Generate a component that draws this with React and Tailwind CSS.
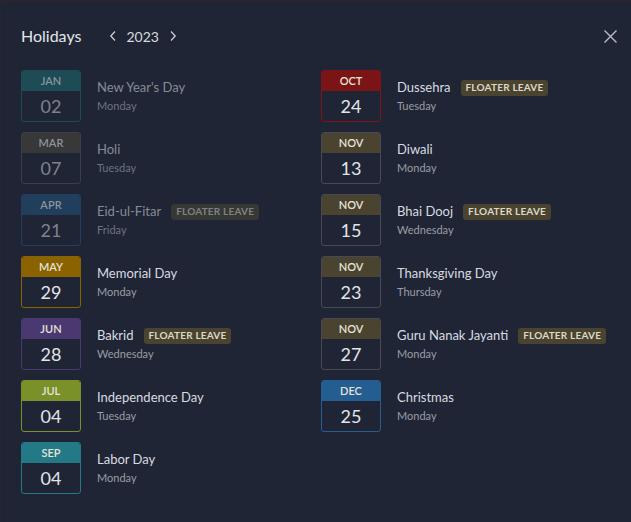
import React from "react";

const left = [
  { m: "JAN", d: "02", name: "New Year's Day", day: "Monday", head: "bg-[#1d4b56]", border: "border-[#1d4b56]", past: true },
  { m: "MAR", d: "07", name: "Holi", day: "Tuesday", head: "bg-[#383838]", border: "border-[#3b3e45]", past: true },
  { m: "APR", d: "21", name: "Eid-ul-Fitar", day: "Friday", head: "bg-[#213f5c]", border: "border-[#213f5c]", past: true, floater: true },
  { m: "MAY", d: "29", name: "Memorial Day", day: "Monday", head: "bg-[#8a6300]", border: "border-[#8a6300]" },
  { m: "JUN", d: "28", name: "Bakrid", day: "Wednesday", head: "bg-[#4a3970]", border: "border-[#4a3970]", floater: true },
  { m: "JUL", d: "04", name: "Independence Day", day: "Tuesday", head: "bg-[#7a9129]", border: "border-[#7a9129]" },
  { m: "SEP", d: "04", name: "Labor Day", day: "Monday", head: "bg-[#237a86]", border: "border-[#237a86]" },
];

const right = [
  { m: "OCT", d: "24", name: "Dussehra", day: "Tuesday", head: "bg-[#7b1414]", border: "border-[#7b1414]", floater: true },
  { m: "NOV", d: "13", name: "Diwali", day: "Monday", head: "bg-[#4a4330]", border: "border-[#474a52]" },
  { m: "NOV", d: "15", name: "Bhai Dooj", day: "Wednesday", head: "bg-[#4a4330]", border: "border-[#474a52]", floater: true },
  { m: "NOV", d: "23", name: "Thanksgiving Day", day: "Thursday", head: "bg-[#4a4330]", border: "border-[#474a52]" },
  { m: "NOV", d: "27", name: "Guru Nanak Jayanti", day: "Monday", head: "bg-[#4a4330]", border: "border-[#474a52]", floater: true },
  { m: "DEC", d: "25", name: "Christmas", day: "Monday", head: "bg-[#245d8f]", border: "border-[#245d8f]" },
];

function Item({ h }) {
  const past = h.past;
  return (
    <div className="flex items-center h-[52px]">
      <div className={`w-[60px] h-[52px] rounded-[3px] border ${h.border} flex flex-col overflow-hidden`}>
        <div className={`${h.head} h-[20px] flex items-center justify-center text-[11px] font-semibold ${past ? "text-[#8c969c]" : "text-[#e6e3da]"}`}>
          {h.m}
        </div>
        <div className={`flex-1 flex items-center justify-center text-[18px] ${past ? "text-[#7d838e]" : "text-[#e2e4e8]"}`}>
          {h.d}
        </div>
      </div>
      <div className="ml-[16px] flex flex-col gap-[3px]">
        <div className="flex items-center">
          <span className={`text-[13px] leading-[17px] ${past ? "text-[#868b95]" : "text-[#d9dbe0]"}`}>{h.name}</span>
          {h.floater && (
            <span className={`ml-[10px] h-[16px] px-[5px] rounded-[3px] flex items-center text-[10px] font-bold tracking-[0.2px] ${past ? "bg-[#363836] text-[#80827f]" : "bg-[#4a4330] text-[#ddd8c8]"}`}>
              FLOATER LEAVE
            </span>
          )}
        </div>
        <span className={`text-[11px] leading-[14px] ${past ? "text-[#6e737d]" : "text-[#9a9da4]"}`}>{h.day}</span>
      </div>
    </div>
  );
}

export default function App() {
  return (
    <div className="w-[631px] h-[522px] bg-[#2a2430] pt-[2px] pl-[1px]" style={{ fontFamily: "Lato, 'Open Sans', sans-serif" }}>
      <div className="w-full h-full bg-[#1f2535] pl-[20px] pr-[13px] pt-[23px]">
        <div className="flex items-center h-[22px]">
          <span className="text-[16px] text-[#e4e6ea] font-normal">Holidays</span>
          <div className="flex items-center ml-[28px] text-[#d8dade]">
            <svg width="8" height="12" viewBox="0 0 8 12" fill="none"><path d="M6 1.5 L1.8 6 L6 10.5" stroke="#c9ccd2" strokeWidth="1.3" /></svg>
            <span className="ml-[9px] mr-[10px] text-[14px] font-normal">2023</span>
            <svg width="8" height="12" viewBox="0 0 8 12" fill="none"><path d="M2 1.5 L6.2 6 L2 10.5" stroke="#c9ccd2" strokeWidth="1.3" /></svg>
          </div>
          <div className="ml-auto">
            <svg width="15" height="15" viewBox="0 0 15 15" fill="none"><path d="M1.5 1.5 L13.5 13.5 M13.5 1.5 L1.5 13.5" stroke="#b9bdc5" strokeWidth="1.4" /></svg>
          </div>
        </div>
        <div className="mt-[23px] grid grid-cols-2 w-[600px]">
          <div className="flex flex-col gap-[10px]">
            {left.map((h, i) => <Item key={i} h={h} />)}
          </div>
          <div className="flex flex-col gap-[10px]">
            {right.map((h, i) => <Item key={i} h={h} />)}
          </div>
        </div>
      </div>
    </div>
  );
}
